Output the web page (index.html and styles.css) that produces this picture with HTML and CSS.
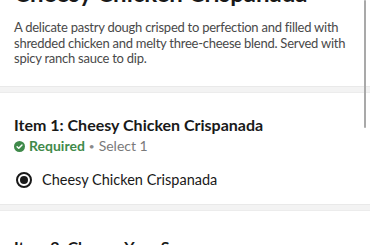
FILE: index.html
```html
<!DOCTYPE html>
<html>
<head>
<meta charset="utf-8">
<link rel="stylesheet" href="styles.css">
</head>
<body>
<div class="page">
  <section class="intro">
    <h1 class="title">Cheesy Chicken Crispanada</h1>
    <p class="desc">A delicate pastry dough crisped to perfection and filled with shredded chicken and melty three-cheese blend. Served with spicy ranch sauce to dip.</p>
  </section>
  <div class="band"></div>
  <section class="group">
    <h2 class="group-title">Item 1: Cheesy Chicken Crispanada</h2>
    <div class="meta">
      <span class="req">
        <svg class="req-icon" viewBox="0 0 12 12" width="11" height="11">
          <circle cx="6" cy="6" r="6" fill="#3f8a4a"/>
          <path d="M3.4 6.2 L5.2 8 L8.7 4.4" fill="none" stroke="#fff" stroke-width="1.6" stroke-linecap="round" stroke-linejoin="round"/>
        </svg>
        Required
      </span>
      <span class="dot">•</span>
      <span class="sel">Select 1</span>
    </div>
    <label class="option">
      <span class="radio"><span class="radio-dot"></span></span>
      <span class="opt-text">Cheesy Chicken Crispanada</span>
    </label>
  </section>
  <div class="band"></div>
  <section class="group next">
    <h2 class="group-title">Item 2: Choose Your Sauce</h2>
  </section>
  <div class="scrollbar"></div>
</div>
</body>
</html>
```
FILE: styles.css
```css
* { box-sizing: border-box; }
html, body { margin: 0; padding: 0; background: #fff; overflow: hidden; }
body { font-family: Lato, "Noto Sans", sans-serif; color: #191919; }
.page { position: relative; width: 370px; height: 245px; overflow: hidden; }
.intro { padding: 0 14px 19px; }
.title { margin: -21px 0 0; font-size: 24px; line-height: 28px; font-weight: 700; color: #191919; }
.desc { margin: 13px 0 0; font-size: 13px; line-height: 15.7px; letter-spacing: -0.25px; color: #494949; }
.band { height: 7px; background: #f3f3f3; border-top: 1px solid #e9e9e9; border-bottom: 1px solid #ececec; }
.group { padding: 22px 14px 14px; }
.group.next { padding-top: 26px; }
.group-title { margin: 0; font-size: 16px; line-height: 20px; font-weight: 700; color: #191919; }
.meta { display: flex; align-items: center; gap: 4px; margin-top: 2px; font-size: 14px; line-height: 18px; }
.req { display: flex; align-items: center; gap: 4px; color: #3f8a4a; font-weight: 700; }
.req-icon { display: block; }
.dot { color: #8a8a8a; font-size: 10px; }
.sel { color: #7a7a7a; }
.option { display: flex; align-items: center; gap: 10px; margin-top: 15px; padding-left: 2px; font-size: 14.5px; line-height: 20px; color: #191919; }
.radio { width: 16px; height: 16px; border: 2px solid #191919; border-radius: 50%; display: flex; align-items: center; justify-content: center; flex: none; }
.radio-dot { width: 8px; height: 8px; border-radius: 50%; background: #191919; }
.scrollbar { position: absolute; left: 364px; top: 0; width: 2px; height: 128px; background: #a9a9a9; border-radius: 1px; }
```
